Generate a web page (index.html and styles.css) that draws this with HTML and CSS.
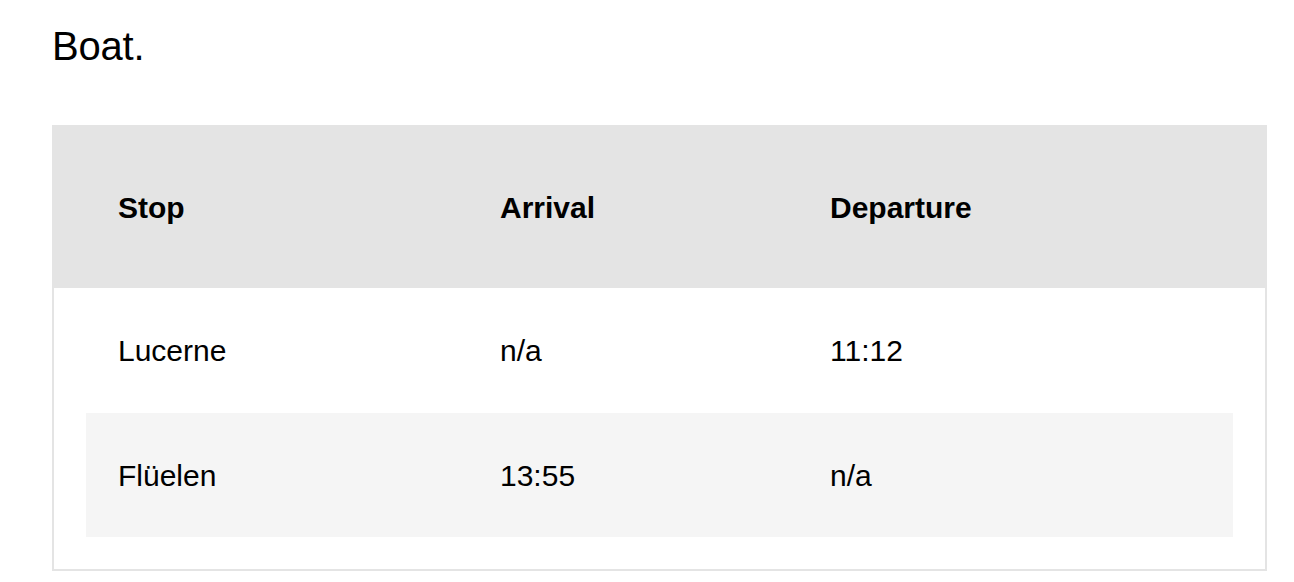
FILE: index.html
```
<!DOCTYPE html>
<html lang="en">
<head>
<meta charset="utf-8">
<title>Boat.</title>
<link rel="stylesheet" href="styles.css">
</head>
<body>
<h1 class="title">Boat.</h1>
<div class="timetable" role="table">
  <div class="tt-head" role="row">
    <div class="cell" role="columnheader">Stop</div>
    <div class="cell" role="columnheader">Arrival</div>
    <div class="cell" role="columnheader">Departure</div>
  </div>
  <div class="tt-body">
    <div class="tt-row tt-row--first" role="row">
      <div class="cell" role="cell">Lucerne</div>
      <div class="cell" role="cell">n/a</div>
      <div class="cell" role="cell">11:12</div>
    </div>
    <div class="tt-row tt-row--alt" role="row">
      <div class="cell" role="cell">Flüelen</div>
      <div class="cell" role="cell">13:55</div>
      <div class="cell" role="cell">n/a</div>
    </div>
  </div>
</div>
</body>
</html>
```
FILE: styles.css
```
* { box-sizing: border-box; }

html, body {
  margin: 0;
  background: #ffffff;
}

body {
  padding: 0 27px 0 52px;
  font-family: "Liberation Sans", Arial, Helvetica, sans-serif;
  color: #000;
}

.title {
  margin: 22px 0 55px;
  font-size: 40px;
  line-height: 48px;
  font-weight: 400;
  letter-spacing: -0.2px;
}

.timetable {
  width: 100%;
}

.tt-head,
.tt-row {
  display: grid;
  grid-template-columns: 382px 330px 1fr;
  font-size: 30px;
  line-height: 36px;
}

.tt-head {
  background: #e4e4e4;
  padding: 65px 34px 62px 34px;
  font-weight: 700;
}

.tt-body {
  border: 2px solid #e4e4e4;
  border-top: 0;
  padding: 0 32px 32px;
}

.tt-row {
  padding: 45px 0 43px;
}

.tt-row--first {
  padding-bottom: 44px;
}

.tt-row--alt {
  background: #f5f5f5;
}

.cell {
  padding-left: 32px;
}
```
